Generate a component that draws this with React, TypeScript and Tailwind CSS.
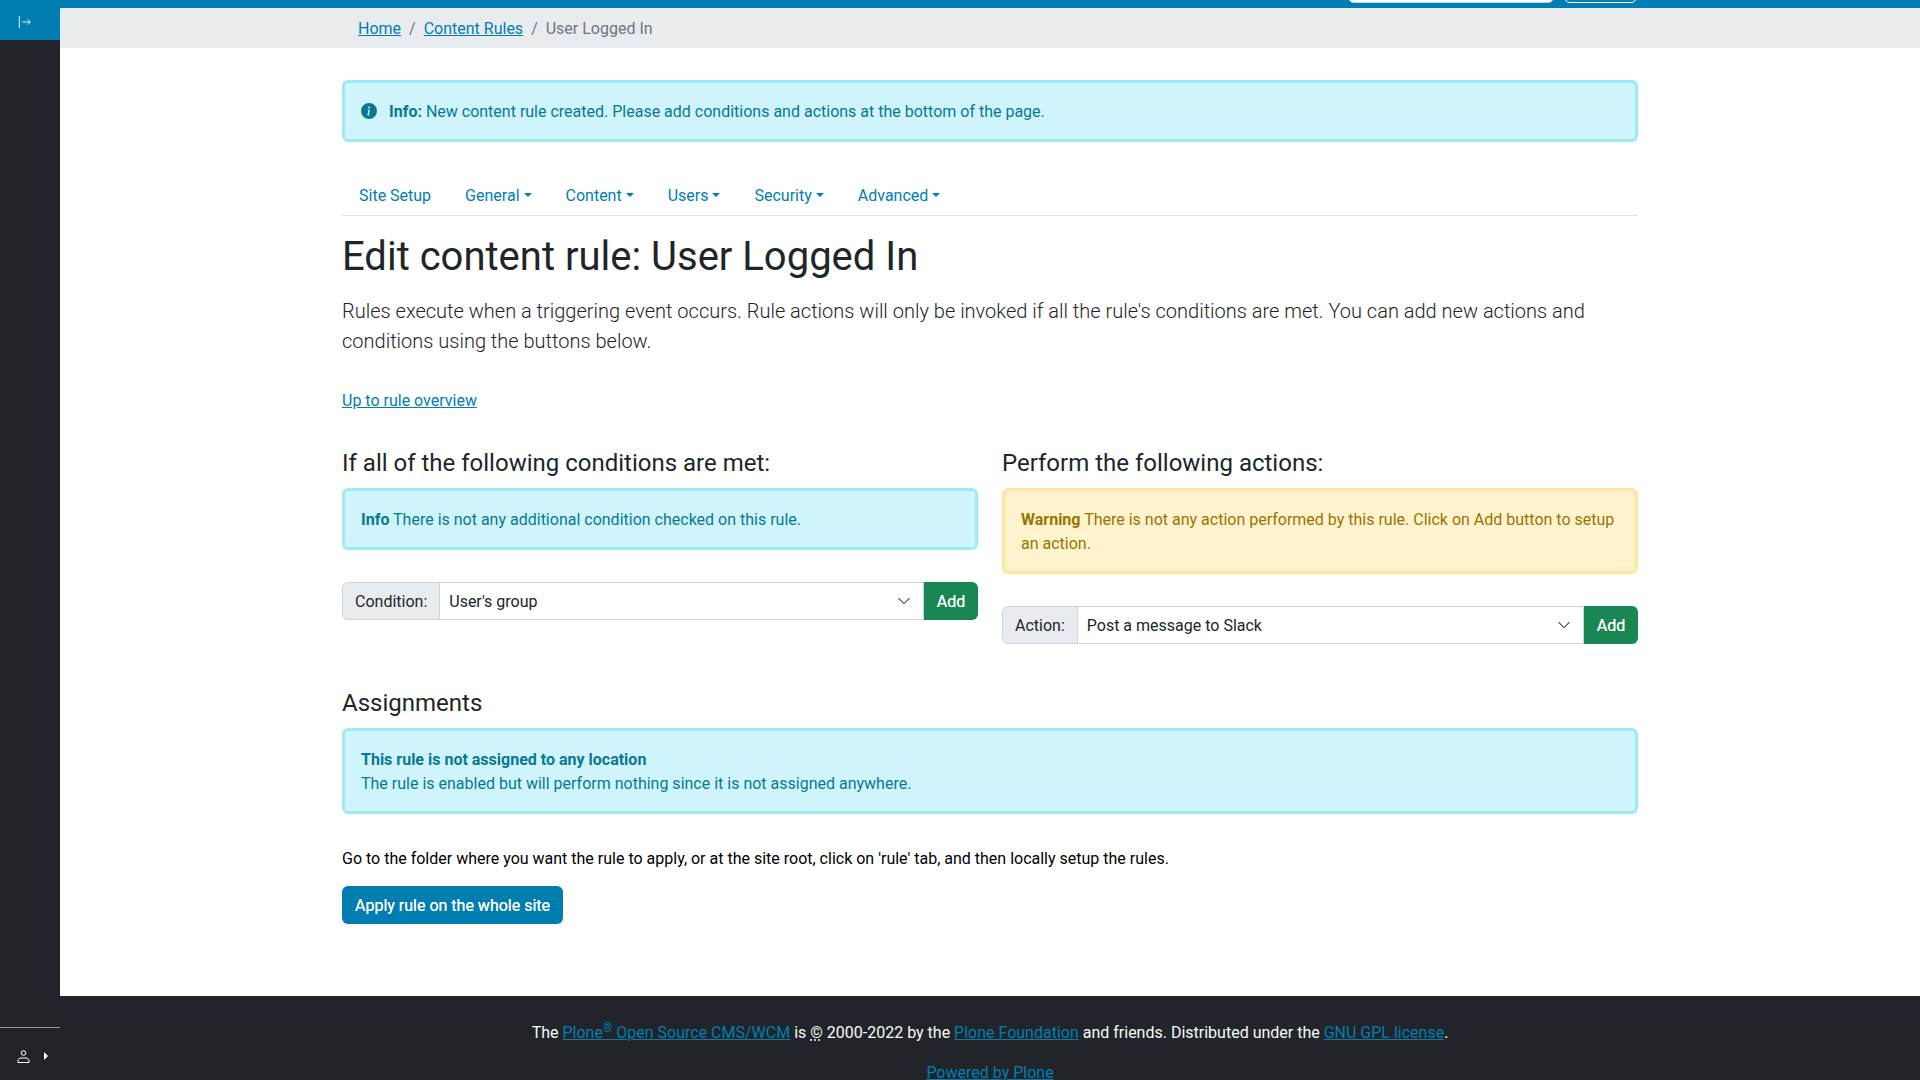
import { BsInfoCircleFill, BsChevronDown } from 'react-icons/bs';

function Caret() {
  return (
    <span className="ml-[4px] inline-block align-[4.5px] border-x-[4px] border-t-[4px] border-x-transparent border-t-[#007eb1]"></span>
  );
}

function NavItem({ label, dropdown = true }: { label: string; dropdown?: boolean }) {
  return (
    <a className="block px-[17px] pt-[10px] pb-[7px] text-[#007eb1]">
      {label}
      {dropdown && <Caret />}
    </a>
  );
}

function SelectGroup({ label, value }: { label: string; value: string }) {
  return (
    <div className="flex h-[38px] w-full">
      <span className="flex items-center px-[12px] pt-px bg-[#e9ecef] border border-[#ced4da] rounded-l-[6px] text-[#212529]">
        {label}
      </span>
      <div className="relative flex-1 -ml-px">
        <select
          defaultValue={value}
          className="w-full h-[38px] pl-[9px] pr-9 pt-px appearance-none bg-white border border-[#ced4da] text-[#212529] outline-none"
        >
          <option>{value}</option>
        </select>
        <BsChevronDown className="absolute right-[13px] top-[12px] w-[14px] h-[14px] text-[#343a40]" />
      </div>
      <button className="w-[54px] pt-px bg-[#198754] text-white rounded-r-[6px] [text-shadow:0_0_0.4px_white]">Add</button>
    </div>
  );
}

export default function App() {
  return (
    <div className="flex h-screen overflow-hidden bg-white font-['Roboto',sans-serif] text-[16px] leading-6 text-[#212529]">
      {/* Toolbar */}
      <aside className="flex flex-col w-[60px] shrink-0 bg-[#212529]">
        <div className="flex items-center justify-center h-[40px] pt-[3px] pr-[11px] bg-[#007eb1]">
          <svg width="14" height="14" viewBox="0 0 16 16" fill="none" stroke="white" strokeWidth="1">
            <path d="M1.5 1v14" />
            <path d="M5 8h9M11 5l3 3-3 3" />
          </svg>
        </div>
        <div className="mt-auto">
          <div className="border-t border-[#9a9da0]"></div>
          <div className="flex items-center h-[52px] pl-[17px] gap-[14px] pt-[4px]">
            <svg width="13" height="13" viewBox="0 0 13 13" fill="none" stroke="white" strokeWidth="1">
              <circle cx="6.5" cy="3" r="2.3" />
              <path d="M1 12.5v-1.5c0-2 1.5-3 3-3h5c1.500 0 3 1 3 3v1.500z" />
            </svg>
            <span className="border-y-[4px] border-l-[4px] border-y-transparent border-l-white"></span>
          </div>
        </div>
      </aside>

      <div className="flex-1 min-w-0">
        {/* Top bar, scrolled almost out of view */}
        <div className="flex items-end justify-end h-[8px] overflow-hidden bg-[#007eb1] pr-[283px] pb-[5px]">
          <div className="w-[206px] h-[38px] shrink-0 bg-white border border-[#ced4da] rounded-[6px]"></div>
          <div className="ml-[10px] w-[73px] h-[38px] shrink-0 border border-white rounded-[6px]"></div>
        </div>

        {/* Breadcrumbs */}
        <div className="h-[40px] bg-[#e9ecef]">
          <div className="flex items-center h-full w-[1296px] mx-auto px-4 pt-[2px]">
            <a className="underline text-[#007eb1]">Home</a>
            <span className="px-2 text-[#6c757d]">/</span>
            <a className="underline text-[#007eb1]">Content Rules</a>
            <span className="px-2 text-[#6c757d]">/</span>
            <span className="text-[#6c757d]">User Logged In</span>
          </div>
        </div>

        <main className="w-[1296px] mx-auto pt-[32px] pb-[72px]">
          <div className="flex items-center h-[62px] px-4 pt-[1px] border-[3px] border-[#9eeaf9] rounded-[6px] bg-[#cff4fc] text-[#087990]">
            <BsInfoCircleFill className="w-4 h-4 mr-[12px] mb-[2px] text-[#087990]" />
            <span>
              <strong className="font-bold">Info:</strong> New content rule created. Please add conditions and actions at the bottom of the page.
            </span>
          </div>

          <nav className="flex mt-[32px] border-b border-[#dee2e6]">
            <NavItem label="Site Setup" dropdown={false} />
            <NavItem label="General" />
            <NavItem label="Content" />
            <NavItem label="Users" />
            <NavItem label="Security" />
            <NavItem label="Advanced" />
          </nav>

          <h1 className="mt-[17px] text-[40px] leading-[48px] font-normal">Edit content rule: User Logged In</h1>
          <p className="mt-[15px] text-[20px] leading-[30px] font-light">
            Rules execute when a triggering event occurs. Rule actions will only be invoked if all the rule's conditions are met. You can add new actions and conditions using the buttons below.
          </p>
          <p className="mt-[33px]">
            <a className="underline text-[#007eb1]">Up to rule overview</a>
          </p>

          <div className="grid grid-cols-2 gap-x-[24px] mt-[36px]">
            <section>
              <h2 className="text-[24px] leading-[29px] mb-[10px]">If all of the following conditions are met:</h2>
              <div className="mb-[32px] px-4 pt-[17px] pb-[15px] border-[3px] border-[#9eeaf9] rounded-[6px] bg-[#cff4fc] text-[#087990]">
                <strong className="font-bold">Info</strong> There is not any additional condition checked on this rule.
              </div>
              <SelectGroup label="Condition:" value="User's group" />
            </section>
            <section>
              <h2 className="text-[24px] leading-[29px] mb-[10px]">Perform the following actions:</h2>
              <div className="mb-[32px] px-4 pt-[17px] pb-[15px] border-[3px] border-[#ffe69c] rounded-[6px] bg-[#fff3cd] text-[#997404]">
                <strong className="font-bold">Warning</strong> There is not any action performed by this rule. Click on Add button to setup an action.
              </div>
              <SelectGroup label="Action:" value="Post a message to Slack" />
            </section>
          </div>

          <h2 className="mt-[45px] text-[24px] leading-[29px] mb-[10px]">Assignments</h2>
          <div className="px-4 pt-[17px] pb-[15px] border-[3px] border-[#9eeaf9] rounded-[6px] bg-[#cff4fc] text-[#087990]">
            <strong className="block font-bold">This rule is not assigned to any location</strong>
            The rule is enabled but will perform nothing since it is not assigned anywhere.
          </div>

          <p className="mt-[33px] text-black">
            Go to the folder where you want the rule to apply, or at the site root, click on 'rule' tab, and then locally setup the rules.
          </p>
          <button className="block mt-[15px] h-[38px] px-[13px] pt-px bg-[#007eb1] text-white rounded-[6px] [text-shadow:0_0_0.4px_white]">
            Apply rule on the whole site
          </button>
        </main>

        <footer className="bg-[#212529] pt-[25px] text-center text-[#f8f9fa]">
          <p>
            The{' '}
            <a className="underline text-[#007eb1]">
              Plone<sup className="text-[12px]">®</sup> Open Source CMS/WCM
            </a>{' '}
            is <abbr className="underline decoration-dotted underline-offset-2">©</abbr> 2000-2022 by the{' '}
            <a className="underline text-[#007eb1]">Plone Foundation</a> and friends. Distributed under the{' '}
            <a className="underline text-[#007eb1]">GNU GPL license</a>.
          </p>
          <p className="mt-[16px]">
            <a className="underline text-[#007eb1]">Powered by Plone</a>
          </p>
        </footer>
      </div>
    </div>
  );
}
